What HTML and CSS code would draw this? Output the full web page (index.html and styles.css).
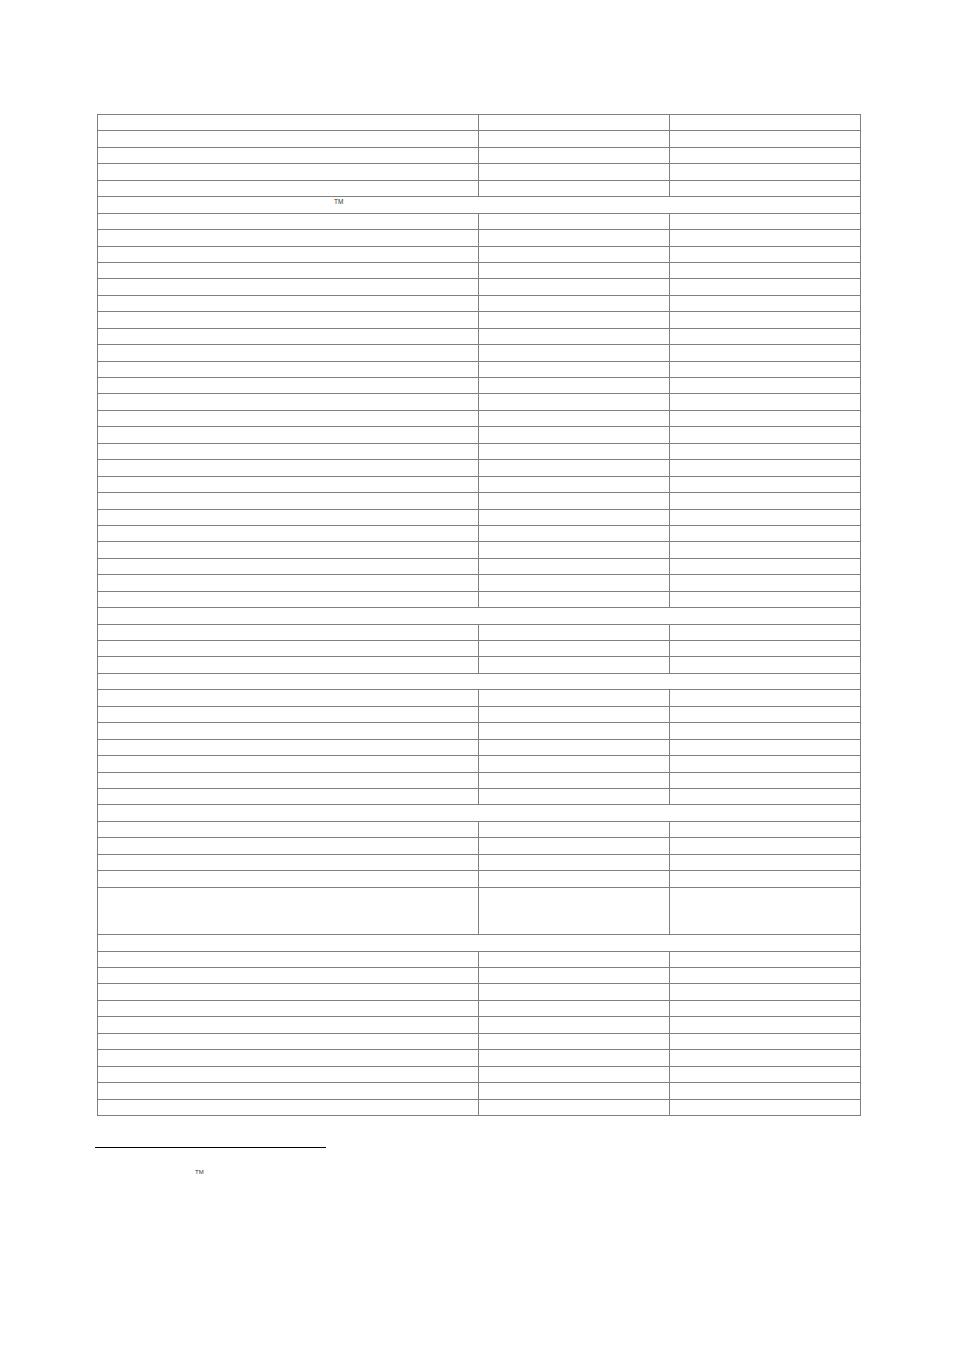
FILE: index.html
```html
<!DOCTYPE html>
<html>
<head>
<meta charset="utf-8">
<link rel="stylesheet" href="styles.css">
</head>
<body>
<div class="page">
<table class="grid">
<colgroup><col class="c1"><col class="c2"><col class="c3"></colgroup>
<tbody>
<tr><td></td><td></td><td></td></tr>
<tr><td></td><td></td><td></td></tr>
<tr><td></td><td></td><td></td></tr>
<tr><td></td><td></td><td></td></tr>
<tr><td></td><td></td><td></td></tr>
<tr class="span"><td colspan="3" class="tmcell"><span class="tm">TM</span></td></tr>
<tr><td></td><td></td><td></td></tr>
<tr><td></td><td></td><td></td></tr>
<tr><td></td><td></td><td></td></tr>
<tr><td></td><td></td><td></td></tr>
<tr><td></td><td></td><td></td></tr>
<tr><td></td><td></td><td></td></tr>
<tr><td></td><td></td><td></td></tr>
<tr><td></td><td></td><td></td></tr>
<tr><td></td><td></td><td></td></tr>
<tr><td></td><td></td><td></td></tr>
<tr><td></td><td></td><td></td></tr>
<tr><td></td><td></td><td></td></tr>
<tr><td></td><td></td><td></td></tr>
<tr><td></td><td></td><td></td></tr>
<tr><td></td><td></td><td></td></tr>
<tr><td></td><td></td><td></td></tr>
<tr><td></td><td></td><td></td></tr>
<tr><td></td><td></td><td></td></tr>
<tr><td></td><td></td><td></td></tr>
<tr><td></td><td></td><td></td></tr>
<tr><td></td><td></td><td></td></tr>
<tr><td></td><td></td><td></td></tr>
<tr><td></td><td></td><td></td></tr>
<tr><td></td><td></td><td></td></tr>
<tr class="span"><td colspan="3"></td></tr>
<tr><td></td><td></td><td></td></tr>
<tr><td></td><td></td><td></td></tr>
<tr><td></td><td></td><td></td></tr>
<tr class="span"><td colspan="3"></td></tr>
<tr><td></td><td></td><td></td></tr>
<tr><td></td><td></td><td></td></tr>
<tr><td></td><td></td><td></td></tr>
<tr><td></td><td></td><td></td></tr>
<tr><td></td><td></td><td></td></tr>
<tr><td></td><td></td><td></td></tr>
<tr><td></td><td></td><td></td></tr>
<tr class="span"><td colspan="3"></td></tr>
<tr><td></td><td></td><td></td></tr>
<tr><td></td><td></td><td></td></tr>
<tr><td></td><td></td><td></td></tr>
<tr><td></td><td></td><td></td></tr>
<tr class="tall"><td></td><td></td><td></td></tr>
<tr class="span"><td colspan="3"></td></tr>
<tr><td></td><td></td><td></td></tr>
<tr><td></td><td></td><td></td></tr>
<tr><td></td><td></td><td></td></tr>
<tr><td></td><td></td><td></td></tr>
<tr><td></td><td></td><td></td></tr>
<tr><td></td><td></td><td></td></tr>
<tr><td></td><td></td><td></td></tr>
<tr><td></td><td></td><td></td></tr>
<tr><td></td><td></td><td></td></tr>
<tr><td></td><td></td><td></td></tr>
</tbody>
</table>
<div class="footnotes">
<p class="note"><span class="tm-small">TM</span></p>
</div>
</div>
</body>
</html>
```

FILE: styles.css
```css
html, body {
  margin: 0;
  padding: 0;
  background: #ffffff;
}
body {
  font-family: "Liberation Sans", Arial, sans-serif;
  color: #000000;
}
.page {
  padding-top: 114px;
  padding-left: 97px;
}
.grid {
  border-collapse: collapse;
  table-layout: fixed;
  width: 764px;
}
.grid col.c1 { width: 381px; }
.grid col.c2 { width: 191px; }
.grid col.c3 { width: 191px; }
.grid tr { height: 16.44px; }
.grid tr.tall { height: 47.6px; }
.grid td {
  border: 1px solid #808080;
  padding: 0;
  font-size: 0;
  line-height: 0;
  vertical-align: top;
}
.grid td.tmcell {
  padding-left: 236px;
}
.tm {
  display: inline-block;
  font-size: 6.5px;
  line-height: 6px;
  margin-top: 2px;
  color: #333333;
}
.footnotes {
  margin-top: 31px;
  margin-left: -2px;
  width: 231px;
  border-top: 1px solid #000000;
}
.note {
  margin: 0;
  padding-top: 21px;
  padding-left: 100px;
  font-size: 6px;
  line-height: 6px;
}
.tm-small {
  color: #333333;
}
```
